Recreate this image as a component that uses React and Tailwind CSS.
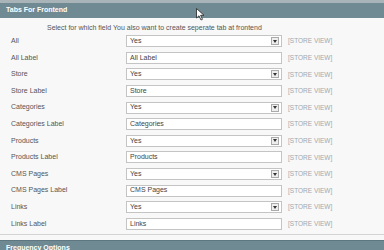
import React from "react";

const rows = [
    { label: "All", type: "select", value: "Yes" },
    { label: "All Label", type: "text", value: "All Label" },
    { label: "Store", type: "select", value: "Yes" },
    { label: "Store Label", type: "text", value: "Store" },
    { label: "Categories", type: "select", value: "Yes" },
    { label: "Categories Label", type: "text", value: "Categories" },
    { label: "Products", type: "select", value: "Yes" },
    { label: "Products Label", type: "text", value: "Products" },
    { label: "CMS Pages", type: "select", value: "Yes" },
    { label: "CMS Pages Label", type: "text", value: "CMS Pages" },
    { label: "Links", type: "select", value: "Yes" },
    { label: "Links Label", type: "text", value: "Links" },
];

function Field({ type, value }) {
    return (
        <div className="relative flex items-center w-[156px] h-[12px] bg-white border border-[#c4c4c4] pl-[3px] text-[7px] text-[#444]">
            {value}
            {type === "select" && (
                <div className="absolute right-[2px] top-[1px] w-[8px] h-[8px] border border-[#aaa] bg-[#eee] flex items-center justify-center">
                    <svg width="4" height="3" viewBox="0 0 4 3">
                        <path d="M0 0H4L2 3Z" fill="#333" />
                    </svg>
                </div>
            )}
        </div>
    );
}

export default function App() {
    return (
        <div
            className="relative w-[384px] h-[250px] overflow-hidden bg-[#f8f8f8]"
            style={{ fontFamily: '"Liberation Sans", Arial, sans-serif' }}
        >
            <div className="h-[3px] bg-[#a9b4b8]" />
            <div className="h-[15px] bg-[#6f8a93] flex items-center pl-[6px] text-white font-bold text-[7px]">
                Tabs For Frontend
            </div>
            <div className="pl-[47px] pt-[5px] h-[15px] text-[7px] text-[#555]">
                Select for which field You also want to create seperate tab at frontend
            </div>
            <div className="flex flex-col">
                {rows.map((r) => (
                    <div key={r.label} className="flex items-center h-[16.6px]">
                        <div className="w-[126px] pl-[11px] text-[7px] text-[#555]">{r.label}</div>
                        <Field type={r.type} value={r.value} />
                        <div className="ml-[6px] text-[6.5px] text-[#a0a8ad]">[STORE VIEW]</div>
                    </div>
                ))}
            </div>
            <div className="mt-[2px] border-t border-[#d4d4d4] h-[6px]" />
            <div className="h-[12px] bg-[#6f8a93] border-t border-[#5d767f] pl-[6px] text-white font-bold text-[7px] leading-[14px]">
                Frequency Options
            </div>
            <svg
                className="absolute left-[196px] top-[8px]"
                width="9"
                height="13"
                viewBox="0 0 9 13"
            >
                <path d="M0.5 0.5V10L3 7.8L5 12L6.5 11.3L4.6 7.3H8Z" fill="#fff" stroke="#222" strokeWidth="0.8" />
            </svg>
        </div>
    );
}
